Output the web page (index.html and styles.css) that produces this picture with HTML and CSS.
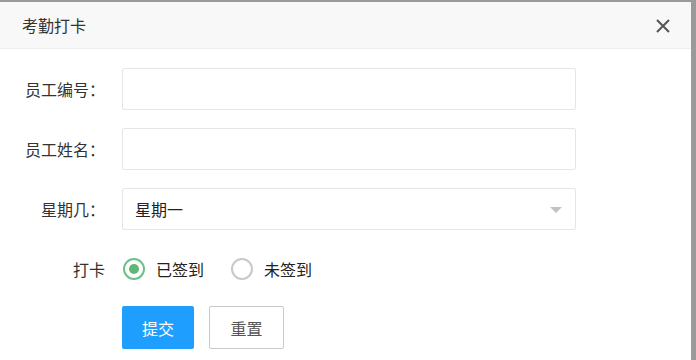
FILE: index.html
```html
<!DOCTYPE html>
<html lang="zh-CN">
<head>
    <meta charset="UTF-8">
    <meta name="viewport" content="width=device-width, initial-scale=1.0">
    <title>考勤打卡</title>
    <link rel="stylesheet" href="styles.css">
</head>
<body>
    <div class="dialog">
        <!-- Header -->
        <div class="dialog-header">
            <span class="dialog-title">考勤打卡</span>
            <span class="dialog-close">
                <svg width="14" height="14" viewBox="0 0 14 14">
                    <path d="M1 1 L13 13 M13 1 L1 13" stroke="#555" stroke-width="2" fill="none"/>
                </svg>
            </span>
        </div>

        <!-- Form -->
        <form class="form">
            <div class="form-item">
                <label class="form-label">员工编号：</label>
                <div class="form-field"><input class="input" type="text"></div>
            </div>
            <div class="form-item">
                <label class="form-label">员工姓名：</label>
                <div class="form-field"><input class="input" type="text"></div>
            </div>
            <div class="form-item">
                <label class="form-label">星期几：</label>
                <div class="form-field">
                    <div class="select">
                        <span>星期一</span>
                        <i class="select-arrow"></i>
                    </div>
                </div>
            </div>
            <div class="form-item">
                <label class="form-label">打卡</label>
                <div class="form-field radios">
                    <span class="radio checked"><i class="radio-icon"></i>已签到</span>
                    <span class="radio"><i class="radio-icon"></i>未签到</span>
                </div>
            </div>
            <div class="form-item buttons">
                <div class="form-field">
                    <button type="button" class="btn btn-primary">提交</button>
                    <button type="button" class="btn btn-default">重置</button>
                </div>
            </div>
        </form>
    </div>
</body>
</html>
```

FILE: styles.css
```css
/* General Reset */
body {
    margin: 0;
    padding: 0;
    background: #9a9a9a;
    font-family: "Noto Sans CJK SC", "Noto Sans", sans-serif;
    font-size: 16px;
    color: #333;
    height: 360px;
    overflow: hidden;
}

/* Dialog */
.dialog {
    margin-top: 2px;
    width: 691px;
    height: 358px;
    background: #fff;
}

.dialog-header {
    height: 46px;
    background: #f8f8f8;
    border-bottom: 1px solid #eee;
    display: flex;
    align-items: center;
    justify-content: space-between;
    padding: 0 21px 0 22px;
}

.dialog-title {
    font-size: 16px;
    color: #333;
    line-height: 20px;
}

.dialog-close {
    display: flex;
    width: 14px;
    height: 14px;
    margin-top: 1px;
}

/* Form */
.form {
    padding-top: 19px;
    display: flex;
    flex-direction: column;
    gap: 18px;
}

.form-item {
    display: flex;
    align-items: center;
    height: 42px;
}

.form-item.buttons {
    height: 43px;
    margin-top: -2px;
}

.form-label {
    width: 105px;
    text-align: right;
    line-height: 20px;
    flex-shrink: 0;
}

.form-field {
    margin-left: 17px;
    width: 454px;
}

.buttons .form-field {
    margin-left: 122px;
    display: flex;
}

.input {
    box-sizing: border-box;
    width: 454px;
    height: 42px;
    border: 1px solid #e6e6e6;
    border-radius: 2px;
    outline: none;
    padding: 0 12px;
    font: inherit;
}

/* Select */
.select {
    box-sizing: border-box;
    height: 42px;
    border: 1px solid #e6e6e6;
    border-radius: 2px;
    display: flex;
    align-items: center;
    justify-content: space-between;
    padding: 0 13px 0 12px;
    color: #222;
}

.select-arrow {
    width: 0;
    height: 0;
    border-left: 6px solid transparent;
    border-right: 6px solid transparent;
    border-top: 6px solid #c2c2c2;
    margin-top: 2px;
}

/* Radios */
.radios {
    display: flex;
    align-items: center;
    height: 42px;
}

.radio {
    display: flex;
    align-items: center;
    gap: 11px;
    margin-right: 26px;
    color: #222;
    line-height: 20px;
}

.radio-icon {
    box-sizing: border-box;
    width: 22px;
    height: 22px;
    border: 2px solid #c9c9c9;
    border-radius: 50%;
    display: flex;
    align-items: center;
    justify-content: center;
    margin-left: 1px;
}

.radio.checked .radio-icon {
    border-color: #6cc18a;
}

.radio.checked .radio-icon::after {
    content: "";
    width: 10px;
    height: 10px;
    border-radius: 50%;
    background: #5fb878;
}

/* Buttons */
.btn {
    height: 43px;
    border-radius: 2px;
    font: inherit;
    padding: 0;
    cursor: pointer;
}

.btn-primary {
    width: 72px;
    background: #1e9fff;
    color: #fff;
    border: none;
}

.btn-default {
    width: 75px;
    margin-left: 15px;
    background: #fff;
    color: #555;
    border: 1px solid #c9c9c9;
}
```
